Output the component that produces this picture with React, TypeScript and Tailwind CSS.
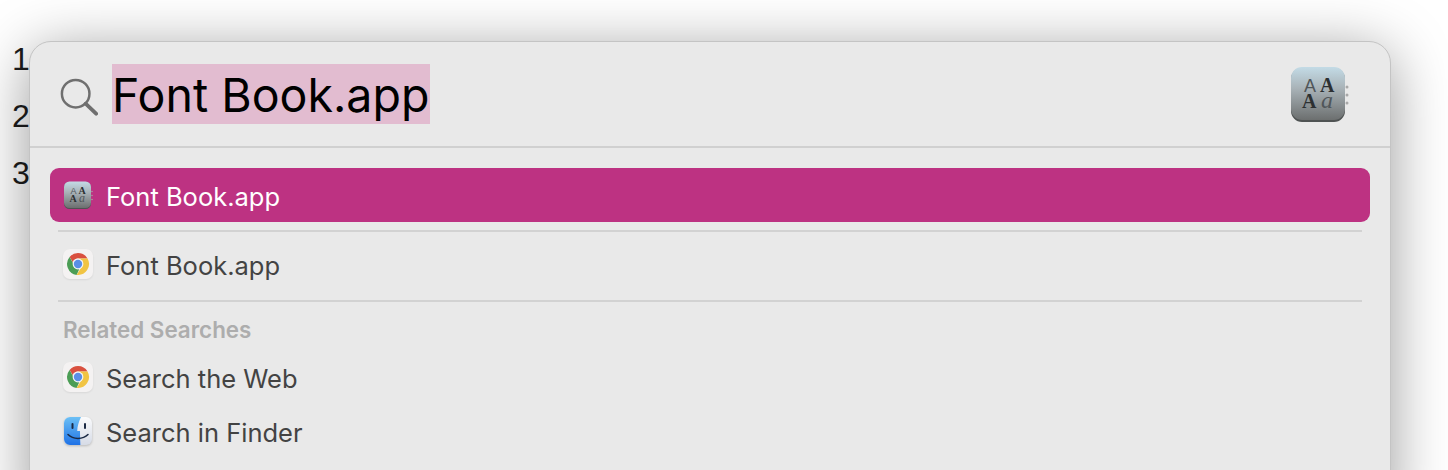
import React from 'react';

const FontBookIcon: React.FC<{ size: number; id: string }> = ({ size, id }) => (
  <svg width={size} height={size} viewBox="0 0 60 60" className="shrink-0">
    <defs>
      <linearGradient id={id} x1="0" y1="0" x2="0" y2="1">
        <stop offset="0" stopColor="#c3dbe6" />
        <stop offset="0.4" stopColor="#a9b3b8" />
        <stop offset="1" stopColor="#6c6f6f" />
      </linearGradient>
    </defs>
    <circle cx="58" cy="23" r="1.5" fill="#a8a8a8" />
    <circle cx="58" cy="31" r="1.5" fill="#a8a8a8" />
    <circle cx="58" cy="39" r="1.5" fill="#a8a8a8" />
    <rect x="2" y="4" width="54" height="54" rx="11" fill="#4f5353" />
    <rect x="2" y="3" width="54" height="53" rx="11" fill={`url(#${id})`} />
    <g fontFamily="'Liberation Serif', serif" fill="#2c3032" fontSize="20">
      <text x="15" y="28" fontFamily="'Liberation Sans', sans-serif" fontWeight="300" fill="#50565a" fontSize="18">A</text>
      <text x="31" y="28" fontWeight="700">A</text>
      <text x="13" y="44" fontWeight="700">A</text>
      <text x="32" y="44" fontStyle="italic" fill="#50565a" fontSize="24">a</text>
    </g>
  </svg>
);

const ChromeIcon: React.FC = () => (
  <div className="w-[30px] h-[30px] shrink-0 rounded-[7px] bg-[#f4f2f2] flex items-center justify-center shadow-[0_1px_2px_rgba(0,0,0,0.08)]">
    <svg width="24" height="24" viewBox="0 0 24 24">
      <path d="M12 1a11 11 0 0 1 9.53 5.5H12a5.5 5.5 0 0 0-5.2 3.7L3.6 5A11 11 0 0 1 12 1z" fill="#d9503f" />
      <path d="M3.6 5l4.2 7.4a5.5 5.5 0 0 0 6 3.7l-3.2 6.8A11 11 0 0 1 3.6 5z" fill="#4b9d55" />
      <path d="M21.53 6.5A11 11 0 0 1 10.6 22.9l4.6-7.4A5.5 5.5 0 0 0 16 8.5l-4-2z" fill="#f1c443" />
      <circle cx="12" cy="12" r="5.4" fill="#f4f4f4" />
      <circle cx="12" cy="12" r="4.2" fill="#5a8fe6" />
    </svg>
  </div>
);

const FinderIcon: React.FC = () => (
  <svg width="30" height="30" viewBox="0 0 30 30" className="shrink-0 drop-shadow-[0_1px_1px_rgba(0,0,0,0.2)]">
    <defs>
      <linearGradient id="finderBlue" x1="0" y1="0" x2="0" y2="1">
        <stop offset="0" stopColor="#6cc0f5" />
        <stop offset="1" stopColor="#1f72e6" />
      </linearGradient>
      <linearGradient id="finderWhite" x1="0" y1="0" x2="0" y2="1">
        <stop offset="0" stopColor="#fafbfc" />
        <stop offset="1" stopColor="#d6dbe6" />
      </linearGradient>
    </defs>
    <rect x="1" y="1" width="28" height="28" rx="6" fill="url(#finderWhite)" />
    <path d="M7 1h11c-2 4-3.6 9-3.8 14H17c0 5 .2 9 .4 14H7a6 6 0 0 1-6-6V7a6 6 0 0 1 6-6z" fill="url(#finderBlue)" />
    <rect x="8.5" y="7" width="2" height="6" rx="1" fill="#1b2a44" />
    <rect x="21" y="7" width="2" height="6" rx="1" fill="#1b2a44" />
    <path d="M5 18.5c5 5.2 15 5.2 20 0" stroke="#1b2a44" strokeWidth="1.5" fill="none" strokeLinecap="round" />
  </svg>
);

const Row: React.FC<{ icon: React.ReactNode; label: string; className?: string }> = ({ icon, label, className }) => (
  <div className={`flex items-center h-[54px] rounded-[9px] pl-[13px] gap-[13px] text-[25.5px] ${className ?? 'text-[#434343]'}`}>
    <div className="w-[30px] flex justify-center">{icon}</div>
    <span className="pt-[4px]">{label}</span>
  </div>
);

const Divider: React.FC = () => <div className="h-[2px] mx-2 bg-[#d2d2d2]" />;

export default function App() {
  return (
    <div className="relative w-[1448px] h-[470px] overflow-hidden bg-white font-['Liberation_Sans',sans-serif]">
      <div className="pt-[31px] pl-[12px] flex flex-col text-[32px] leading-[57px] text-[#1c1c1c]">
        <span>1</span>
        <span>2</span>
        <span>3</span>
      </div>

      <div className="absolute left-[29px] top-[41px] w-[1362px] h-[480px] rounded-[22px] border border-[#c4c4c4] bg-[#e9e9e9] shadow-[0_10px_60px_rgba(0,0,0,0.4)] font-['Inter',sans-serif]">
        <div className="flex items-center h-[106px] border-b-2 border-[#d0d0d0] pl-[30px] pr-[41px]">
          <svg width="38" height="38" viewBox="0 0 40 40" fill="none" stroke="#6f6f6f" className="shrink-0 mt-[5px]">
            <circle cx="16.5" cy="16.5" r="14.5" strokeWidth="2.6" />
            <path d="M27 27l11 10.5" strokeWidth="4" strokeLinecap="round" />
          </svg>
          <span className="ml-[14px] w-[318px] h-[60px] bg-[#e2bcd0] text-black text-[46.5px] leading-[62px] whitespace-nowrap">
            Font Book.app
          </span>
          <div className="ml-auto">
            <FontBookIcon size={60} id="fbLarge" />
          </div>
        </div>

        <div className="px-5 pt-5">
          <Row
            icon={<FontBookIcon size={30} id="fbSmall" />}
            label="Font Book.app"
            className="bg-[#bd3282] text-white"
          />
          <div className="mt-2 mb-[5px]">
            <Divider />
          </div>
          <Row icon={<ChromeIcon />} label="Font Book.app" />
          <div className="mt-[9px]">
            <Divider />
          </div>
          <div className="pl-[13px] pt-[15px] pb-[7px] text-[22.4px] leading-[26px] font-semibold text-[#adadad]">
            Related Searches
          </div>
          <Row icon={<ChromeIcon />} label="Search the Web" />
          <Row icon={<FinderIcon />} label="Search in Finder" />
        </div>
      </div>
    </div>
  );
}
